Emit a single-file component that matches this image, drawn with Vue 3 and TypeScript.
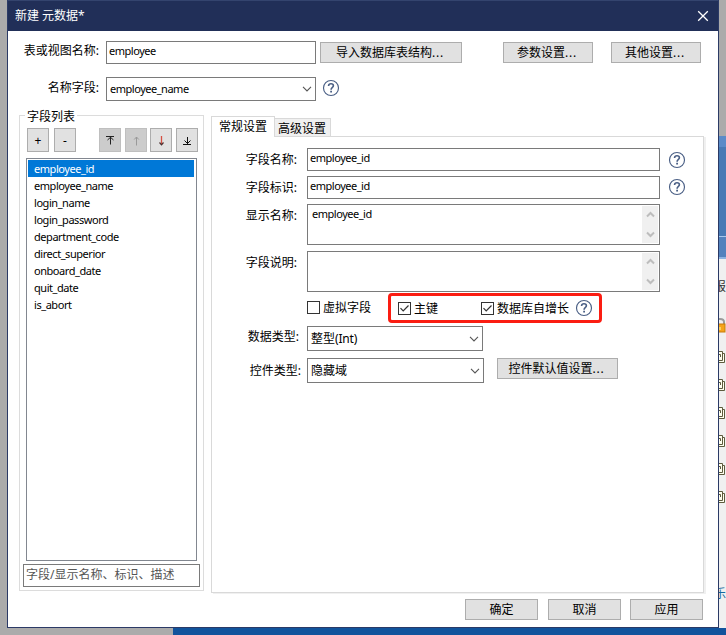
<script setup lang="ts">
import { ref, h } from 'vue'
import type { FunctionalComponent } from 'vue'

const fields: string[] = [
  'employee_id', 'employee_name', 'login_name', 'login_password', 'department_code',
  'direct_superior', 'onboard_date', 'quit_date', 'is_abort',
]
const selected = ref(0)
const virtualField = ref(false)
const primaryKey = ref(true)
const autoIncrement = ref(true)

const HelpIcon: FunctionalComponent = () =>
  h('svg', { width: 18, height: 18, viewBox: '0 0 18 18', fill: 'none', stroke: '#4a5f85' }, [
    h('circle', { cx: 9, cy: 9, r: 7.5, 'stroke-width': 1.15 }),
    h('path', { d: 'M6.6 6.9V6.6Q6.7 4.7 9 4.7Q11.4 4.7 11.4 6.7Q11.4 7.7 10.2 8.6Q9.1 9.4 9.1 10.8', 'stroke-width': 1.6 }),
    h('path', { d: 'M8.2 12.6H10', 'stroke-width': 1.6 }),
  ])

const Chevron: FunctionalComponent = () =>
  h('svg', { width: 10, height: 6, viewBox: '0 0 10 6', fill: 'none', stroke: '#555' }, [
    h('path', { d: 'M1 .9L5 4.9L9 .9', 'stroke-width': 1.1 }),
  ])
</script>

<template>
  <div class="desktop">
    <div class="backdrop">
      <div class="sky"><span></span></div>
      <div class="side">
        <span class="side-text">报</span>
        <svg class="lock" width="10" height="15" viewBox="0 0 10 15">
          <path d="M-3 7V4Q-3 1 1 1Q5 1 5 4V7" fill="none" stroke="#9b9b9b" stroke-width="2" />
          <rect x="-4" y="6" width="10" height="8" fill="#f5a31a" stroke="#c77a08" />
          <path d="M0 9H2V12H0" fill="#fbd060" />
        </svg>
        <svg v-for="n in 6" :key="n" class="copy" width="7" height="14" viewBox="0 0 7 14" fill="none" stroke="#5d5b3d">
          <path d="M3.5 3.5H5.5V12.5H0" fill="#fffff0" />
          <path d="M0 1.5H3.5V10.5H0M0 4.5H1.5V7" fill="#fffff0" />
        </svg>
        <span class="side-text link">乐</span>
      </div>
      <div class="strip"></div>
    </div>

    <div class="dialog">
      <header class="title">
        <span>新建 元数据*</span>
        <svg width="12" height="12" viewBox="0 0 12 12"><path d="M1.2 1.2L10.8 10.8M10.8 1.2L1.2 10.8" stroke="#fff" stroke-width="1.3" /></svg>
      </header>

      <div class="top-row first">
        <label>表或视图名称:</label>
        <div class="input">employee</div>
        <button class="import">导入数据库表结构<i>...</i></button>
        <button class="params">参数设置<i>...</i></button>
        <button class="others">其他设置<i>...</i></button>
      </div>
      <div class="top-row second">
        <label>名称字段:</label>
        <div class="select"><span>employee_name</span><Chevron /></div>
        <HelpIcon />
      </div>

      <main>
        <section class="group">
          <h2>字段列表</h2>
          <div class="tools">
            <button>+</button>
            <button>-</button>
            <button class="dark gap">
              <svg width="9" height="10" viewBox="0 0 9 10"><path d="M0 1.5H8M4.5 2V9.5M1.5 5L4.5 2.3L7.5 5" fill="none" stroke="#222" /></svg>
            </button>
            <button class="dark">
              <svg width="7" height="11" viewBox="0 0 7 11"><path d="M3.5 2V10.5M1.2 4.5L3.5 2L5.8 4.5" fill="none" stroke="#999" /></svg>
            </button>
            <button>
              <svg width="7" height="11" viewBox="0 0 7 11"><path d="M3.5 1V9.5" stroke="#d55042" stroke-width="1.3" /><path d="M1.5 7.5L3.5 9.8L5.5 7.5" fill="none" stroke="#493030" stroke-width="1.2" /></svg>
            </button>
            <button>
              <svg width="9" height="10" viewBox="0 0 9 10"><path d="M0 9.5H8M4.5 2V9M1.5 5.5L4.5 8.5L7.5 5.5" fill="none" stroke="#111" /></svg>
            </button>
          </div>
          <ul>
            <li v-for="(f, i) in fields" :key="f" :class="{ active: i === selected }" @click="selected = i">{{ f }}</li>
          </ul>
          <div class="search">字段/显示名称、标识、描述</div>
        </section>

        <section class="tabs">
          <nav>
            <a class="current">常规设置</a>
            <a>高级设置</a>
          </nav>
          <div class="panel">
            <div class="row">
              <label>字段名称:</label>
              <div class="input">employee_id</div>
              <HelpIcon />
            </div>
            <div class="row">
              <label>字段标识:</label>
              <div class="input">employee_id</div>
              <HelpIcon class="up" />
            </div>
            <div v-for="(t, i) in [{ l: '显示名称:', v: 'employee_id' }, { l: '字段说明:', v: '' }]" :key="i" class="row area-row">
              <label>{{ t.l }}</label>
              <div class="area">
                <span>{{ t.v }}</span>
                <div class="bar">
                  <svg width="9" height="7" viewBox="0 0 9 7"><path d="M1 5.5L4.5 2L8 5.5" fill="none" stroke="#bdbdbd" stroke-width="2" /></svg>
                  <svg width="9" height="7" viewBox="0 0 9 7"><path d="M1 1.5L4.5 5L8 1.5" fill="none" stroke="#bdbdbd" stroke-width="2" /></svg>
                </div>
              </div>
            </div>
            <div class="checks">
              <div class="check" @click="virtualField = !virtualField">
                <svg width="13" height="13" viewBox="0 0 13 13"><rect x=".5" y=".5" width="12" height="12" fill="#fff" stroke="#333" /><path v-if="virtualField" d="M2.5 6.2L5.2 9L10.5 3.5" fill="none" stroke="#333" stroke-width="1.2" /></svg>
                <span>虚拟字段</span>
              </div>
              <div class="marked">
                <div class="check key" @click="primaryKey = !primaryKey">
                  <svg width="13" height="13" viewBox="0 0 13 13"><rect x=".5" y=".5" width="12" height="12" fill="#fff" stroke="#333" /><path v-if="primaryKey" d="M2.5 6.2L5.2 9L10.5 3.5" fill="none" stroke="#333" stroke-width="1.2" /></svg>
                  <span>主键</span>
                </div>
                <div class="check" @click="autoIncrement = !autoIncrement">
                  <svg width="13" height="13" viewBox="0 0 13 13"><rect x=".5" y=".5" width="12" height="12" fill="#fff" stroke="#333" /><path v-if="autoIncrement" d="M2.5 6.2L5.2 9L10.5 3.5" fill="none" stroke="#333" stroke-width="1.2" /></svg>
                  <span>数据库自增长</span>
                </div>
                <HelpIcon />
              </div>
            </div>
            <div class="row type-row">
              <label>数据类型:</label>
              <div class="select"><b>整型<em>(Int)</em></b><Chevron /></div>
            </div>
            <div class="row control-row">
              <label>控件类型:</label>
              <div class="select"><b>隐藏域</b><Chevron /></div>
              <button>控件默认值设置<i>...</i></button>
            </div>
          </div>
        </section>
      </main>

      <footer>
        <button>确定</button>
        <button>取消</button>
        <button>应用</button>
      </footer>
    </div>
  </div>
</template>

<style>
body { overflow: hidden; }
</style>

<style scoped>
* { box-sizing: border-box; }
.desktop {
  position: relative; width: 726px; height: 635px; overflow: hidden; background: #ababab;
  font: 12px/17px "Noto Sans", "Noto Sans CJK SC", sans-serif; color: #000;
}
.backdrop { display: flex; flex-direction: column; height: 635px; padding-top: 136px; }
.sky { align-self: flex-end; width: 7px; height: 123px; background: linear-gradient(#5b8bc8 0 11px, #487ab5 11px 100px, #a9c8ec 100px 101px, #5382bd 101px 121px, #8db4e2 121px); }
.side { align-self: flex-end; width: 7px; height: 369px; overflow: hidden; background: #f0f0f0; display: flex; flex-direction: column; }
.side-text { margin: 18px 0 0 -5px; width: 12px; height: 17px; font-family: "Noto Sans CJK SC", sans-serif; color: #333; flex: none; }
.side-text.link { margin-top: 66px; color: #14699f; }
.lock { margin: 24px 0 17px; flex: none; }
.copy { margin-bottom: 14px; flex: none; }
.strip { height: 7px; margin-left: 173px; background: #11539c; }

.dialog {
  position: absolute; left: 7px; top: 0; width: 712px; height: 628px;
  display: flex; flex-direction: column; background: #fff; border: 1px solid #2b3a66; border-width: 0 1px 1px;
}
.title {
  height: 31px; flex: none; display: flex; justify-content: space-between; align-items: center;
  padding: 0 9px 0 7px; background: #212f58; border-top: 1px solid #34446e; color: #fff;
}
.title span { margin-top: -1px; }
button {
  display: flex; align-items: center; justify-content: center; flex: none; height: 21px; padding: 0 2px 0 0;
  font: inherit; color: #000; background: #e1e1e1; border: 1px solid #adadad; border-radius: 0;
}
i { font-style: normal; letter-spacing: .8px; }
label { text-align: right; white-space: nowrap; flex: none; height: 17px; }
.input, .select, .area { border: 1px solid #7a7a7a; background: #fff; flex: none; font-size: 11px; letter-spacing: -.48px; }
.input { height: 23px; padding: 0 2px; }
.select { height: 25px; display: flex; justify-content: space-between; align-items: center; padding: 0 3px; }
.select span { margin-top: -2px; }
.select b { font-weight: normal; font-size: 12px; letter-spacing: 0; margin-top: -1px; }
.select em { font-style: normal; letter-spacing: -.2px; }

.top-row { display: flex; flex: none; }
.top-row label { width: 91px; margin-right: 7px; }
.first { height: 36px; padding-top: 10px; }
.first .input { width: 210px; margin-right: 4px; }
.first label { margin-top: 1px; }
.first button { margin-top: 1px; }
.import { width: 142px; }
.params { width: 90px; margin-left: 41px; }
.others { width: 90px; margin-left: 18px; }
.second { height: 48px; padding-top: 10px; }
.second label { margin-top: 2px; }
.second .select { width: 210px; height: 24px; margin-right: 6px; }
.second > svg { margin-top: 2px; }

main { display: flex; flex: none; height: 479px; padding-left: 11px; }
.group { width: 185px; height: 476px; border: 1px solid #dcdcdc; padding: 0 3px; flex: none; }
.group h2 { font: inherit; width: 52px; height: 17px; margin: -8px 0 3px 2px; padding-left: 2px; background: #fff; }
.tools { display: flex; padding-left: 4px; gap: 4px; }
.tools button { width: 22px; height: 24px; padding: 0; }
.tools button:nth-child(2) { margin-left: 1px; }
.tools .gap { margin-left: 19px; }
.tools button:nth-child(5) { margin-left: -1px; }
.tools .dark { background: #ccc; border-color: #bfbfbf; }
ul { list-style: none; width: 171px; height: 403px; margin: 6px 0 3px 3px; padding: 1px; border: 1px solid #828790; }
li { width: 166px; height: 17px; padding-left: 6px; font-size: 11px; letter-spacing: -.45px; }
li.active { background: #0078d7; color: #fff; }
.search { width: 177px; height: 23px; padding: 1px 2px; border: 1px solid #7a7a7a; color: #555; white-space: nowrap; }

.tabs { margin: 1px 0 0 7px; width: 495px; }
nav { display: flex; height: 20px; align-items: flex-end; }
nav a { height: 18px; width: 57px; padding-left: 3px; line-height: 19px; background: #f0f0f0; border: 1px solid #d9d9d9; border-bottom: 0; white-space: nowrap; margin-left: -1px; }
nav .current { width: 64px; height: 21px; margin: 0 0 -1px; padding-left: 7px; line-height: 19px; background: #fff; position: relative; }
.panel { width: 493px; height: 457px; border: 1px solid #d9d9d9; box-shadow: 2px 1px 0 #f0f0f0; padding-top: 11px; }
.row { display: flex; height: 28px; }
.row label { width: 85px; margin: 3px 10px 0 0; }
.row .input, .area { width: 353px; }
.row > svg { margin: 3px 0 0 8px; }
.row > svg.up { margin-top: 2px; }
.area-row { height: 47px; }
.area { display: flex; justify-content: space-between; height: 41px; padding: 1px 1px 1px 4px; }
.area span { margin-top: -1px; }
.bar { width: 16px; height: 37px; background: #f0f0f0; display: flex; flex-direction: column; justify-content: space-between; align-items: center; padding: 5px 0 5px; }
.checks { display: flex; height: 37px; padding-left: 95px; margin-top: -5px; }
.check { display: flex; align-items: center; gap: 3px; white-space: nowrap; height: 17px; }
.checks > .check { width: 81px; margin-top: 6px; }
.marked { display: flex; align-items: center; width: 214px; height: 30px; margin-top: 0; border: 3px solid #fb1d12; border-radius: 4px; padding-left: 7px; }
.key { width: 83px; }
.marked > svg { margin-left: 6px; }
.type-row { height: 32px; margin-top: -4px; }
.type-row label { width: 87px; margin: 2px 8px 0 0; }
.type-row .select { width: 176px; }
.control-row label { width: 89px; margin: 4px 6px 0 0; }
.control-row .select { width: 177px; margin-right: 13px; }
.control-row button { width: 121px; }

footer { display: flex; gap: 9px; justify-content: flex-end; padding: 5px 15px 0 0; }
footer button { width: 73px; padding: 0; }
footer button:first-child { margin-right: 1px; }
</style>
